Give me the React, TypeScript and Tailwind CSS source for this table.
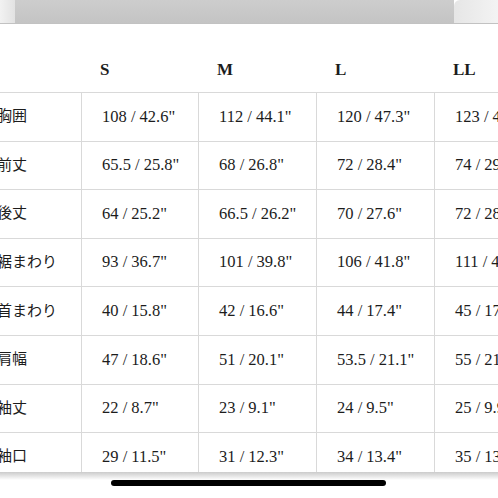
const sizes = ["S", "M", "L", "LL"];

const rows: { label: string; values: string[] }[] = [
  { label: "胸囲", values: ['108 / 42.6"', '112 / 44.1"', '120 / 47.3"', '123 / 48.4"'] },
  { label: "前丈", values: ['65.5 / 25.8"', '68 / 26.8"', '72 / 28.4"', '74 / 29.1"'] },
  { label: "後丈", values: ['64 / 25.2"', '66.5 / 26.2"', '70 / 27.6"', '72 / 28.3"'] },
  { label: "裾まわり", values: ['93 / 36.7"', '101 / 39.8"', '106 / 41.8"', '111 / 43.7"'] },
  { label: "首まわり", values: ['40 / 15.8"', '42 / 16.6"', '44 / 17.4"', '45 / 17.7"'] },
  { label: "肩幅", values: ['47 / 18.6"', '51 / 20.1"', '53.5 / 21.1"', '55 / 21.7"'] },
  { label: "袖丈", values: ['22 / 8.7"', '23 / 9.1"', '24 / 9.5"', '25 / 9.9"'] },
  { label: "袖口", values: ['29 / 11.5"', '31 / 12.3"', '34 / 13.4"', '35 / 13.8"'] },
];

const colWidths = ["w-[117px]", "w-[118px]", "w-[118px]", "w-[118px]"];

export default function App() {
  return (
    <div
      className="relative w-[498px] h-[498px] overflow-hidden bg-white text-[#1c1c1c]"
      style={{ fontFamily: '"Liberation Serif", "Noto Sans CJK JP", serif' }}
    >
      {/* top bar */}
      <div className="flex h-[24px] border-b border-[#c2c2c2]">
        <div className="w-[15px] bg-gradient-to-r from-[#f2f2f2] to-[#e2e2e2]" />
        <div className="flex-1 bg-gradient-to-b from-[#cdcdcd] to-[#c4c4c4]" />
        <div className="w-[44px] rounded-tl-[6px] bg-gradient-to-r from-[#e6e6e6] to-[#f3f3f3]" />
      </div>

      {/* header */}
      <div className="flex h-[68px] items-end pb-[12px] ml-[-3px]">
        <div className="w-[84px] shrink-0" />
        {sizes.map((s, i) => (
          <div key={s} className={`${colWidths[i]} shrink-0 pl-[19px] text-[17px] font-bold leading-[20px]`}>
            {s}
          </div>
        ))}
      </div>

      {/* table */}
      <div className="h-[380px] overflow-hidden border-t-[1.5px] border-[#d9d9d9] ml-[-3px]">
        {rows.map((r) => (
          <div key={r.label} className="flex h-[48.6px] border-b-[1.5px] border-[#d9d9d9]">
            <div className="w-[84px] shrink-0 flex items-center text-[15px] leading-none">{r.label}</div>
            {r.values.map((v, i) => (
              <div
                key={i}
                className={`${colWidths[i]} shrink-0 flex items-center pl-[20px] border-l-[1.5px] border-[#d9d9d9] text-[16.5px] leading-none whitespace-pre`}
              >
                {v}
              </div>
            ))}
          </div>
        ))}
      </div>

      {/* bottom shadow */}
      <div className="h-[8px] bg-gradient-to-b from-[#cbcbcb] to-white" />

      {/* home indicator */}
      <div className="absolute left-[111px] top-[480px] h-[6px] w-[275px] rounded-full bg-black" />
    </div>
  );
}
